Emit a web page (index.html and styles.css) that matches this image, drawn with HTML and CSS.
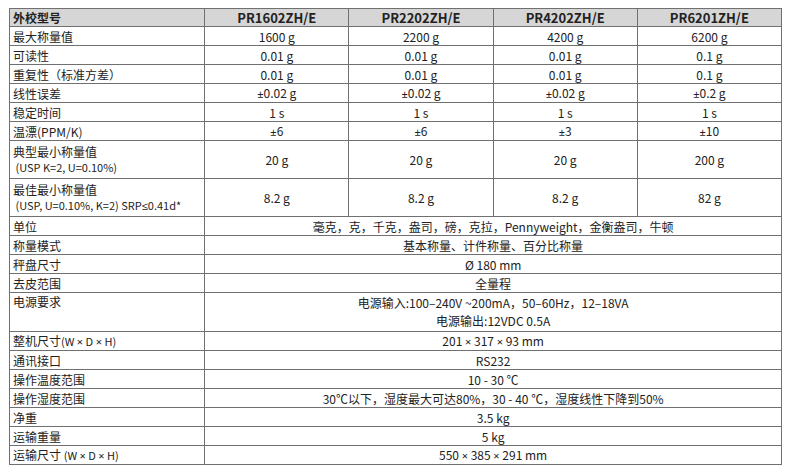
FILE: index.html
```html
<!DOCTYPE html>
<html lang="zh-CN">
<head>
<meta charset="utf-8">
<title>规格参数</title>
<link rel="stylesheet" href="styles.css">
</head>
<body>
<table class="spec">
  <colgroup>
    <col class="c-label">
    <col class="c-val">
    <col class="c-val">
    <col class="c-val">
    <col class="c-val">
  </colgroup>
  <thead>
    <tr class="head">
      <th class="label">外校型号</th>
      <th>PR1602ZH/E</th>
      <th>PR2202ZH/E</th>
      <th>PR4202ZH/E</th>
      <th>PR6201ZH/E</th>
    </tr>
  </thead>
  <tbody>
    <tr><td class="label">最大称量值</td><td>1600 g</td><td>2200 g</td><td>4200 g</td><td>6200 g</td></tr>
    <tr><td class="label">可读性</td><td>0.01 g</td><td>0.01 g</td><td>0.01 g</td><td>0.1 g</td></tr>
    <tr><td class="label">重复性（标准方差）</td><td>0.01 g</td><td>0.01 g</td><td>0.01 g</td><td>0.1 g</td></tr>
    <tr><td class="label">线性误差</td><td><span class="sym">±</span>0.02 g</td><td><span class="sym">±</span>0.02 g</td><td><span class="sym">±</span>0.02 g</td><td><span class="sym">±</span>0.2 g</td></tr>
    <tr><td class="label">稳定时间</td><td>1 s</td><td>1 s</td><td>1 s</td><td>1 s</td></tr>
    <tr><td class="label">温漂(PPM/K)</td><td><span class="sym">±</span>6</td><td><span class="sym">±</span>6</td><td><span class="sym">±</span>3</td><td><span class="sym">±</span>10</td></tr>
    <tr class="tall"><td class="label">典型最小称量值<br><span class="sub">&nbsp;(USP K=2, U=0.10%)</span></td><td>20 g</td><td>20 g</td><td>20 g</td><td>200 g</td></tr>
    <tr class="tall"><td class="label">最佳最小称量值<br><span class="sub">&nbsp;(USP, U=0.10%, K=2) SRP<span class="sym">≤</span>0.41d*</span></td><td>8.2 g</td><td>8.2 g</td><td>8.2 g</td><td>82 g</td></tr>
    <tr><td class="label">单位</td><td colspan="4">毫克，克，千克，盎司，磅，克拉，Pennyweight，金衡盎司，牛顿</td></tr>
    <tr><td class="label">称量模式</td><td colspan="4">基本称量、计件称量、百分比称量</td></tr>
    <tr><td class="label">秤盘尺寸</td><td colspan="4">Ø 180 mm</td></tr>
    <tr><td class="label">去皮范围</td><td colspan="4">全量程</td></tr>
    <tr class="tall"><td class="label top">电源要求</td><td colspan="4" class="power">电源输入:100–240V ~200mA，50–60Hz，12–18VA<br>电源输出:12VDC 0.5A</td></tr>
    <tr><td class="label">整机尺寸<span class="sub">(W <span class="sym">×</span> D <span class="sym">×</span> H)</span></td><td colspan="4">201 <span class="sym">×</span> 317 <span class="sym">×</span> 93 mm</td></tr>
    <tr><td class="label">通讯接口</td><td colspan="4">RS232</td></tr>
    <tr><td class="label">操作温度范围</td><td colspan="4">10 - 30 ℃</td></tr>
    <tr><td class="label">操作湿度范围</td><td colspan="4">30℃以下，湿度最大可达80%，30 - 40 ℃，湿度线性下降到50%</td></tr>
    <tr><td class="label">净重</td><td colspan="4">3.5 kg</td></tr>
    <tr><td class="label">运输重量</td><td colspan="4">5 kg</td></tr>
    <tr><td class="label">运输尺寸 <span class="sub">(W <span class="sym">×</span> D <span class="sym">×</span> H)</span></td><td colspan="4">550 <span class="sym">×</span> 385 <span class="sym">×</span> 291 mm</td></tr>
  </tbody>
</table>
</body>
</html>
```

FILE: styles.css
```css
html, body {
  margin: 0;
  padding: 0;
  background: #ffffff;
}

body {
  padding: 8px 0 0 9px;
  font-family: "Noto Sans CJK SC", "Noto Sans", sans-serif;
  color: #222222;
}

.spec {
  border-collapse: collapse;
  table-layout: fixed;
  width: 773px;
  font-size: 12px;
  line-height: 15px;
}

.c-label { width: 195px; }
.c-val { width: 144px; }

.spec th,
.spec td {
  border: 1px solid #707070;
  padding: 0 3px;
  height: 18px;
  text-align: center;
  vertical-align: middle;
  white-space: nowrap;
}

.spec .head th {
  background: #d6d6d6;
  font-weight: 700;
  font-size: 13px;
  height: 17px;
}

.spec .head .label {
  font-size: 12px;
}

.spec .label {
  text-align: left;
}

.spec .sub {
  font-size: 11px;
}

.spec .sym {
  font-family: "Noto Sans", sans-serif;
  font-size: 11px;
}

.spec .tall td {
  height: 37px;
}

.spec .top {
  vertical-align: top;
  padding-top: 1px;
}

.spec .power {
  line-height: 18px;
}
```
